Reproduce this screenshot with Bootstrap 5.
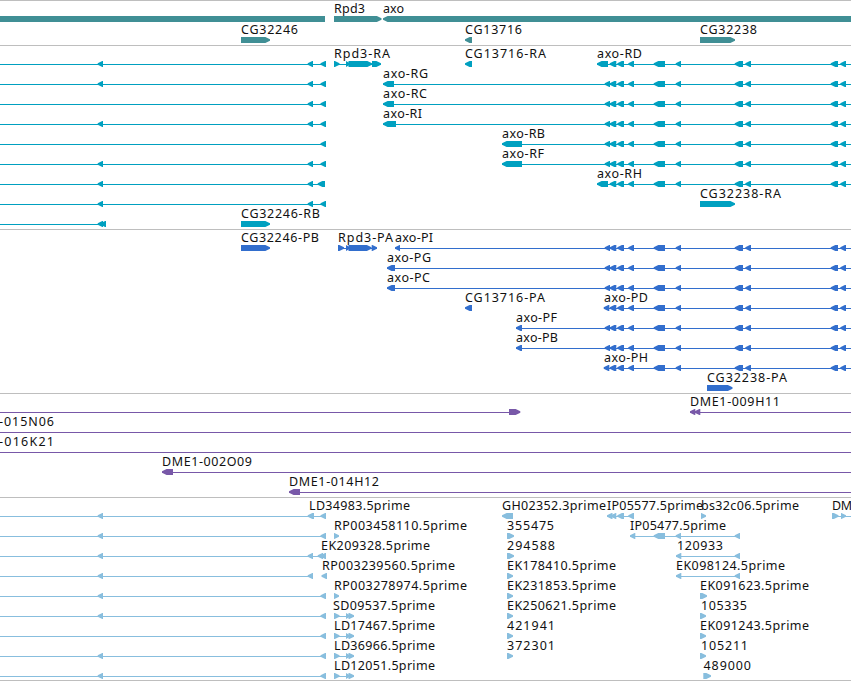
<!DOCTYPE html>
<html lang="en">
<head>
  <meta charset="UTF-8">
  <meta name="viewport" content="width=device-width, initial-scale=1.0">
  <title>Genome browser</title>
  <link href="https://cdn.jsdelivr.net/npm/bootstrap@5.3.0/dist/css/bootstrap.min.css" rel="stylesheet">
  <style>
    body { font-family: "Noto Sans", "DejaVu Sans", sans-serif; }
    .track { border-top: 1px solid #bebebe; padding-bottom: 3px; }
    .track:last-child { padding-bottom: 2px; border-bottom: 1px solid #bebebe; }
    .lane { height: 20px; }
    .lane svg { overflow: visible; width: 851px; height: 20px; }
    .lane text { font-size: 12.5px; fill: #111; }
    .track-gene { color: #408f95; padding-bottom: 2px; }
    .track-gene .lane { height: 21px; }
    .track-rna { color: #00a0c0; }
    .track-protein { color: #326ecd; }
    .track-bac { color: #7858a8; }
    .track-est { color: #88bede; }
  </style>
</head>
<body class="bg-white overflow-hidden">
  <main id="browser" class="d-flex flex-column overflow-hidden"></main>

  <script src="https://cdn.jsdelivr.net/npm/bootstrap@5.3.0/dist/js/bootstrap.bundle.min.js"></script>
  <script>
    // lane: t = labels [x, end, text], n = introns [x, end], l / r = exons pointing left / right, b = plain blocks
    const tail = [[617.3, 624], [628.3, 634], [653.7, 665], [675.7, 681], [734.7, 743], [745.3, 751], [830.7, 838], [840.3, 846]];
    const axo = [[604.7, 610], [609.7, 616.3], ...tail];
    const axoShort = [[609.7, 616.3], ...tail];
    const A = [97.7, 103];
    const B = [307.7, 313];
    const C = [320.5, 326];
    const rpd = [[334, 339.5], [346, 350], [348.5, 354]];

    const tracks = [
      { name: 'gene', lanes: [
        { t: [[334, 365, 'Rpd3'], [383, 404, 'axo']], b: [[0, 325]], r: [[334, 381.5]], l: [[383, 851]] },
        { t: [[241, 298, 'CG32246'], [465, 522, 'CG13716'], [700, 757, 'CG32238']], r: [[241, 270], [700, 735]], l: [[465, 472]] }
      ] },
      { name: 'rna', lanes: [
        { t: [[334, 390, 'Rpd3-RA'], [465, 546, 'CG13716-RA'], [597, 642, 'axo-RD']], n: [[0, 326], [334, 381], [597, 851]], l: [A, B, C, [465, 472], [597, 608], ...axoShort], r: [[334, 339.5], [346, 350], [348.5, 372], [372, 381]] },
        { t: [[383, 428, 'axo-RG']], n: [[0, 326], [383, 851]], l: [A, B, C, [383, 394], ...axo] },
        { t: [[383, 427, 'axo-RC']], n: [[0, 326], [383, 851]], l: [B, C, [383, 394], ...axo] },
        { t: [[383, 422, 'axo-RI']], n: [[0, 326], [383, 851]], l: [A, B, C, [383, 396], ...axo] },
        { t: [[502, 545, 'axo-RB']], n: [[0, 326], [502, 851]], l: [C, [502, 522], ...axo] },
        { t: [[502, 544, 'axo-RF']], n: [[0, 326], [502, 851]], l: [A, B, C, [502, 522], ...axo] },
        { t: [[597, 642, 'axo-RH']], n: [[0, 325], [597, 851]], l: [A, B, [317.7, 325], [597, 608], ...axoShort] },
        { t: [[700, 781, 'CG32238-RA']], n: [[0, 326]], l: [A, B, C], r: [[700, 735]] },
        { t: [[241, 320, 'CG32246-RB']], n: [[0, 106]], l: [A, [100.5, 106]], r: [[241, 270]] }
      ] },
      { name: 'protein', lanes: [
        { t: [[241, 319, 'CG32246-PB'], [338, 393, 'Rpd3-PA'], [395, 433, 'axo-PI']], n: [[338, 377], [395, 851]], l: [[395, 400], ...axo], r: [[241, 270], [338, 344], [346, 350], [348.5, 371.5], [371.7, 377]] },
        { t: [[387, 431, 'axo-PG']], n: [[387, 851]], l: [[387, 395], ...axo] },
        { t: [[387, 430, 'axo-PC']], n: [[387, 851]], l: [[387, 395], ...axo] },
        { t: [[465, 545, 'CG13716-PA'], [604, 648, 'axo-PD']], n: [[604, 851]], l: [[465, 472], [603.7, 609.3], ...axoShort] },
        { t: [[516, 557, 'axo-PF']], n: [[516, 851]], l: [[516, 522], ...axo] },
        { t: [[516, 558, 'axo-PB']], n: [[516, 851]], l: [[516, 522], ...axo] },
        { t: [[604, 648, 'axo-PH']], n: [[604, 851]], l: [[603.7, 609.3], ...axoShort] },
        { t: [[707, 787, 'CG32238-PA']], r: [[707, 732.5]] }
      ] },
      { name: 'bac', lanes: [
        { t: [[690, 780, 'DME1-009H11']], n: [[0, 510], [690, 851]], r: [[509, 520.3]], l: [[690, 695.3], [694.7, 700.3]] },
        { t: [[-1, 54, '-015N06']], n: [[0, 851]] },
        { t: [[-1, 54, '-016K21']], n: [[0, 851]] },
        { t: [[162, 252, 'DME1-002O09']], n: [[162, 851]], l: [[162, 173]] },
        { t: [[289, 379, 'DME1-014H12']], n: [[289, 851]], l: [[289, 300]] }
      ] },
      { name: 'est', lanes: [
        { t: [[309, 410, 'LD34983.5prime'], [502, 606, 'GH02352.3prime'], [607, 703, 'IP05577.5prime'], [701, 799, 'bs32c06.5prime'], [832, 852, 'DM']], n: [[0, 326], [607, 634], [832, 851]], l: [A, [307.7, 314], C, [502, 513], [607, 612.5], [611, 616.3], [617.3, 624], [628.3, 634]], r: [[701, 706], [832, 838.5], [841, 846]] },
        { t: [[334, 467, 'RP003458110.5prime'], [507, 554, '355475'], [630, 726, 'IP05477.5prime']], n: [[0, 326], [630, 740]], l: [A, C, [630, 635.3], [653.7, 665], [675.7, 681], [734.7, 740]], r: [[334, 339], [507, 514]] },
        { t: [[321, 430, 'EK209328.5prime'], [507, 555, '294588'], [677, 723, '120933']], n: [[0, 326], [676, 740]], l: [A, B, [317.7, 323], C, [676, 681.3], [734.7, 740]], r: [[507, 514]] },
        { t: [[322, 455, 'RP003239560.5prime'], [507, 616, 'EK178410.5prime'], [676, 785, 'EK098124.5prime']], n: [[0, 313], [676, 740]], l: [A, B, [321.5, 327], [676, 681.3], [734.7, 740]], r: [[507, 513]] },
        { t: [[334, 467, 'RP003278974.5prime'], [507, 616, 'EK231853.5prime'], [700, 809, 'EK091623.5prime']], n: [[0, 326]], l: [A, C], r: [[334, 339], [507, 513], [700, 707]] },
        { t: [[333, 435, 'SD09537.5prime'], [507, 616, 'EK250621.5prime'], [701, 747, '105335']], n: [[0, 326], [334, 354]], l: [A, C], r: [...rpd, [507, 513], [700, 706]] },
        { t: [[334, 435, 'LD17467.5prime'], [507, 555, '421941'], [700, 809, 'EK091243.5prime']], n: [[0, 326], [334, 354]], l: [C], r: [...rpd, [507, 513], [700, 706]] },
        { t: [[334, 435, 'LD36966.5prime'], [507, 555, '372301'], [701, 748, '105211']], n: [[0, 326], [334, 354]], l: [A, C], r: [...rpd, [507, 513], [700, 706]] },
        { t: [[334, 435, 'LD12051.5prime'], [703.5, 751, '489000']], n: [[0, 326], [334, 354]], l: [A, C], r: [...rpd, [703.3, 711]] }
      ] }
    ];

    function drawLane(lane) {
      let out = '';
      (lane.n || []).forEach(([x, e]) => {
        out += `<rect x="${x}" y="18" width="${e - x}" height="1"/>`;
      });
      (lane.b || []).forEach(([x, e]) => {
        out += `<rect x="${x}" y="15" width="${e - x}" height="6"/>`;
      });
      (lane.l || []).forEach(([x, e]) => {
        const h = Math.min(x + 4.6, e);
        out += `<path d="M${x} 17.2L${h} 15H${e}V21H${h}L${x} 18.8Z"/>`;
      });
      (lane.r || []).forEach(([x, e]) => {
        const h = Math.max(e - 4.6, x);
        out += `<path d="M${e} 17.2L${h} 15H${x}V21H${h}L${e} 18.8Z"/>`;
      });
      (lane.t || []).forEach(([x, e, label]) => {
        out += `<text x="${x}" y="12" textLength="${e - x}">${label}</text>`;
      });
      return `<div class="lane"><svg class="d-block" fill="currentColor">${out}</svg></div>`;
    }

    document.getElementById('browser').innerHTML = tracks.map(track =>
      `<section class="track track-${track.name}">${track.lanes.map(drawLane).join('')}</section>`
    ).join('');
  </script>
</body>
</html>
